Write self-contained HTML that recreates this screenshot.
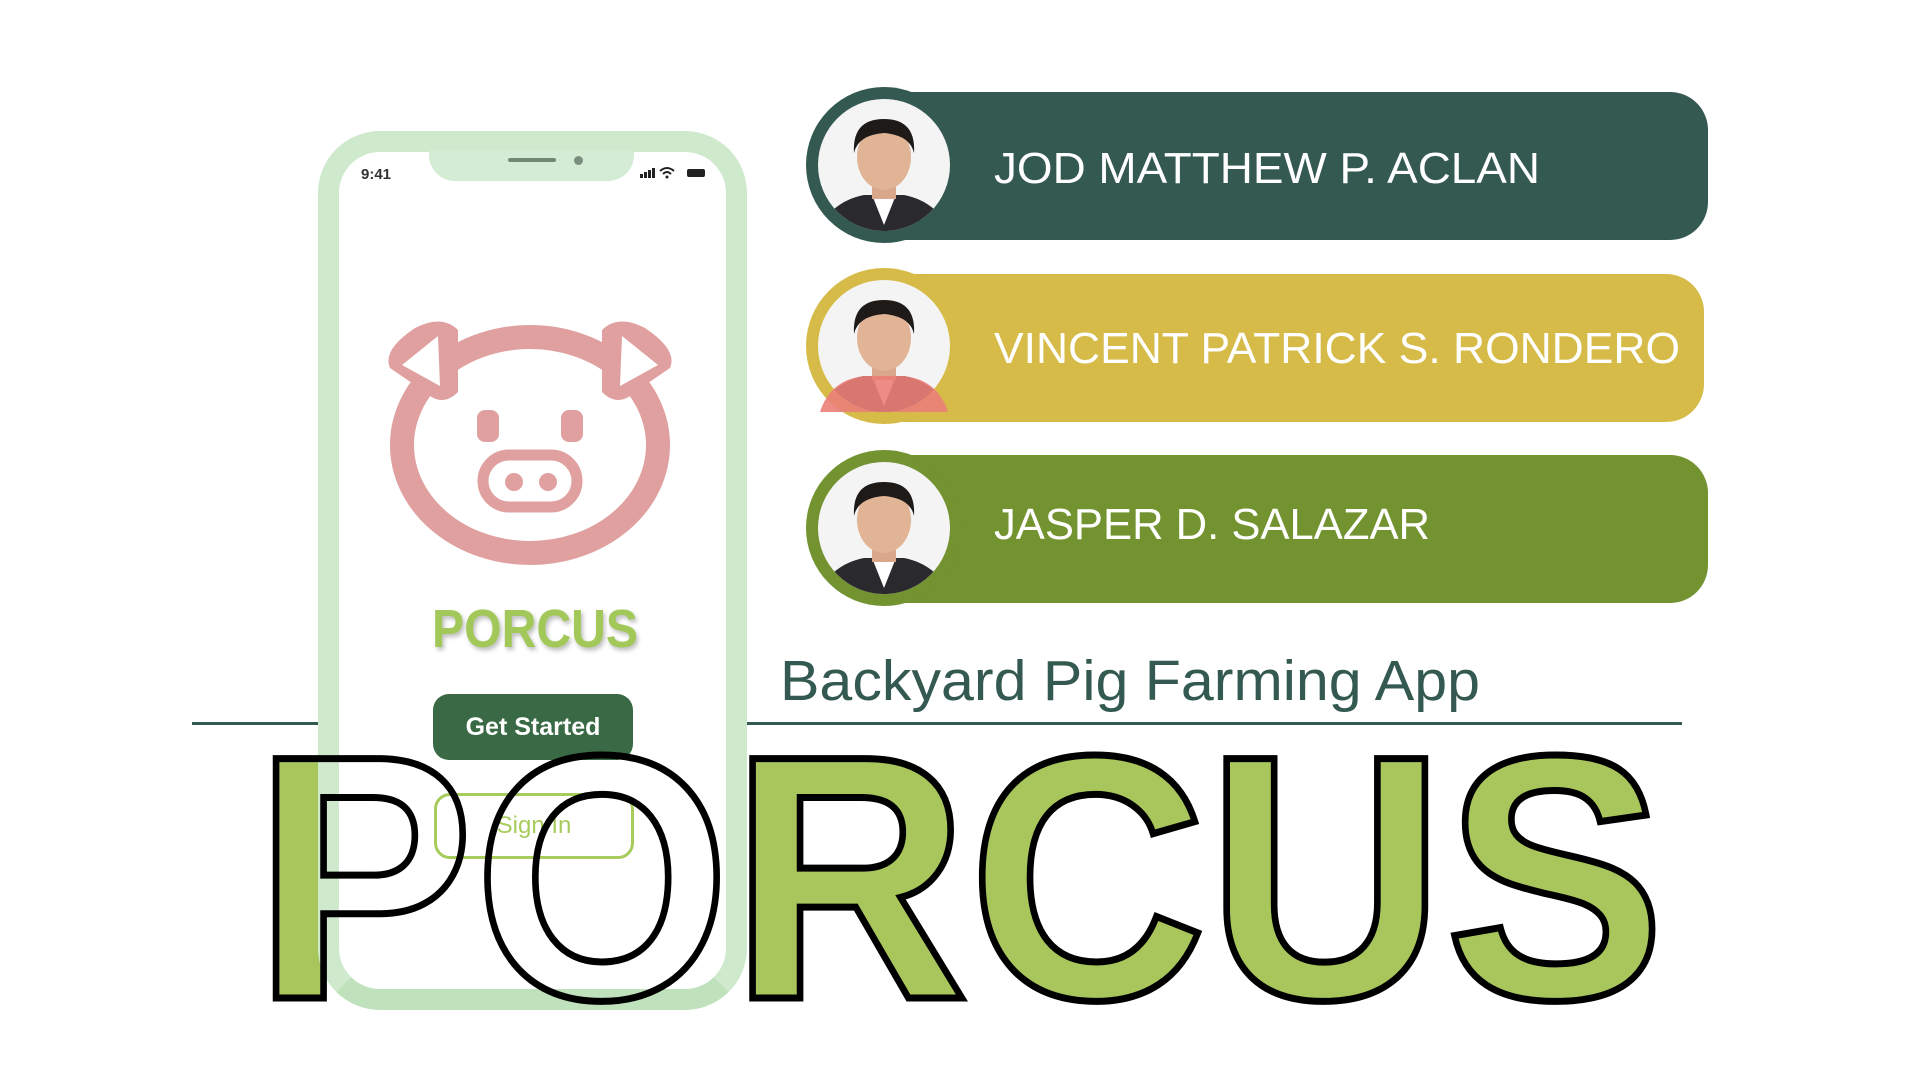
<!DOCTYPE html>
<html><head><style>
body{margin:0;width:1920px;height:1080px;background:#fff;position:relative;overflow:hidden;font-family:"Liberation Sans",sans-serif}
.a{position:absolute}
.bar{position:absolute;left:880px;width:828px;height:148px;border-radius:0 38px 38px 0}
</style></head><body>
<div class="bar" style="top:92px;background:#335950"></div>
<div class="bar" style="top:274px;background:#d6bb48;width:824px"></div>
<div class="bar" style="top:455px;background:#739230"></div>

<svg class="a" style="left:0;top:0" width="1920" height="1080">
<defs>
<clipPath id="c1"><circle cx="0" cy="0" r="66"/></clipPath>
<g id="p1"><circle r="66" fill="#f4f4f4"/><g clip-path="url(#c1)">
<path d="M-70 80 Q-60 38 -20 30 L20 30 Q60 38 70 80Z" fill="#2a2a2e"/>
<path d="M-12 30 L0 60 L12 30Z" fill="#fff"/>
<rect x="-12" y="10" width="24" height="24" fill="#d9a78a"/>
<ellipse cx="0" cy="-8" rx="27" ry="33" fill="#e2b496"/>
<path d="M-30 -12 Q-32 -46 0 -46 Q32 -46 30 -12 Q26 -30 0 -32 Q-26 -30 -30 -12Z" fill="#1d1a18"/></g></g>
</defs>
<g font-family="Liberation Sans" font-size="44" fill="#fff">
<text x="994" y="183" textLength="546" lengthAdjust="spacingAndGlyphs">JOD MATTHEW P. ACLAN</text>
<text x="994" y="363" textLength="686" lengthAdjust="spacingAndGlyphs">VINCENT PATRICK S. RONDERO</text>
<text x="994" y="539" textLength="436" lengthAdjust="spacingAndGlyphs">JASPER D. SALAZAR</text>
</g>
<circle cx="884" cy="165" r="78" fill="#335950"/>
<use href="#p1" x="884" y="165"/>
<circle cx="884" cy="346" r="78" fill="#d6bb48"/>
<use href="#p1" x="884" y="346"/>
<path d="M820 412 Q830 380 864 376 L904 376 Q938 380 948 412" fill="#ea8078" opacity="0.9"/>
<circle cx="884" cy="528" r="78" fill="#739230"/>
<use href="#p1" x="884" y="528"/>
<rect x="192" y="722" width="1490" height="3" fill="#335950"/>
<text x="780" y="700" font-family="Liberation Sans" font-size="57" fill="#335950" textLength="700" lengthAdjust="spacingAndGlyphs">Backyard Pig Farming App</text>
<text x="254" y="998" font-family="Liberation Sans" font-weight="bold" font-size="348" fill="#a8c65c" stroke="#a8c65c" stroke-width="6" textLength="1411" lengthAdjust="spacingAndGlyphs">PORCUS</text>
</svg>

<!-- phone -->
<div class="a" style="left:318px;top:131px;width:387px;height:837px;border:21px solid #cfe9cd;border-bottom-color:#bfe2bc;border-radius:62px;background:#fff"></div>
<div class="a" style="left:429px;top:150px;width:205px;height:31px;background:#d3ecd3;border-radius:0 0 26px 26px"></div>
<div class="a" style="left:508px;top:158px;width:48px;height:4px;background:#6f8a74;border-radius:2px"></div>
<div class="a" style="left:574px;top:156px;width:9px;height:9px;background:#7b8f7f;border-radius:50%"></div>
<div class="a" style="left:361px;top:166px;font-size:15px;color:#333;font-weight:bold">9:41</div>
<svg class="a" style="left:640px;top:166px" width="72" height="14"><rect x="0" y="8" width="3" height="4" fill="#222"/><rect x="4" y="6" width="3" height="6" fill="#222"/><rect x="8" y="4" width="3" height="8" fill="#222"/><rect x="12" y="2" width="3" height="10" fill="#222"/><path d="M20 5 Q27 -1 34 5 M23 8 Q27 4 31 8" stroke="#222" stroke-width="2" fill="none"/><circle cx="27" cy="11" r="1.5" fill="#222"/><rect x="47" y="3" width="18" height="8" rx="2" fill="#222"/></svg>

<svg class="a" style="left:380px;top:310px" width="300" height="260">
<g fill="none" stroke="#e0a0a0" stroke-width="24" stroke-linejoin="round" stroke-linecap="round">
<ellipse cx="150" cy="135" rx="128" ry="108"/>
</g>
<g fill="#e0a0a0"><path d="M35 18 Q62 4 78 20 L78 82 Q62 98 45 82 L10 58 Q2 40 35 18Z"/><path d="M265 18 Q238 4 222 20 L222 82 Q238 98 255 82 L290 58 Q298 40 265 18Z"/></g>
<g fill="#fff"><path d="M58 26 L60 76 L22 55Z"/><path d="M242 26 L240 76 L278 55Z"/></g>
<rect x="97" y="100" width="22" height="32" rx="8" fill="#e0a0a0"/><rect x="181" y="100" width="22" height="32" rx="8" fill="#e0a0a0"/>
<rect x="103" y="145" width="94" height="52" rx="26" fill="none" stroke="#e0a0a0" stroke-width="11"/>
<circle cx="134" cy="172" r="9" fill="#e0a0a0"/><circle cx="168" cy="172" r="9" fill="#e0a0a0"/>
</svg>
<svg class="a" style="left:428px;top:596px;overflow:visible" width="220" height="60">
<text x="4" y="51" font-family="Liberation Sans" font-weight="bold" font-size="54" fill="#a3c85a" textLength="206" lengthAdjust="spacingAndGlyphs" style="filter:drop-shadow(2px 3px 2px rgba(0,0,0,.25))">PORCUS</text>
</svg>
<div class="a" style="left:433px;top:694px;width:200px;height:66px;background:#3a6a45;border-radius:16px;color:#fff;font-weight:bold;font-size:25px;text-align:center;line-height:66px">Get Started</div>
<div class="a" style="left:434px;top:793px;width:194px;height:60px;border:3px solid #a8cc5c;border-radius:16px;color:#a8cc5c;font-size:24px;text-align:center;line-height:60px">Sign In</div>

<svg class="a" style="left:0;top:0" width="1920" height="1080">
<text x="254" y="998" font-family="Liberation Sans" font-weight="bold" font-size="348" fill="none" stroke="#000" stroke-width="7" textLength="1411" lengthAdjust="spacingAndGlyphs">PORCUS</text>
</svg>
</body></html>
